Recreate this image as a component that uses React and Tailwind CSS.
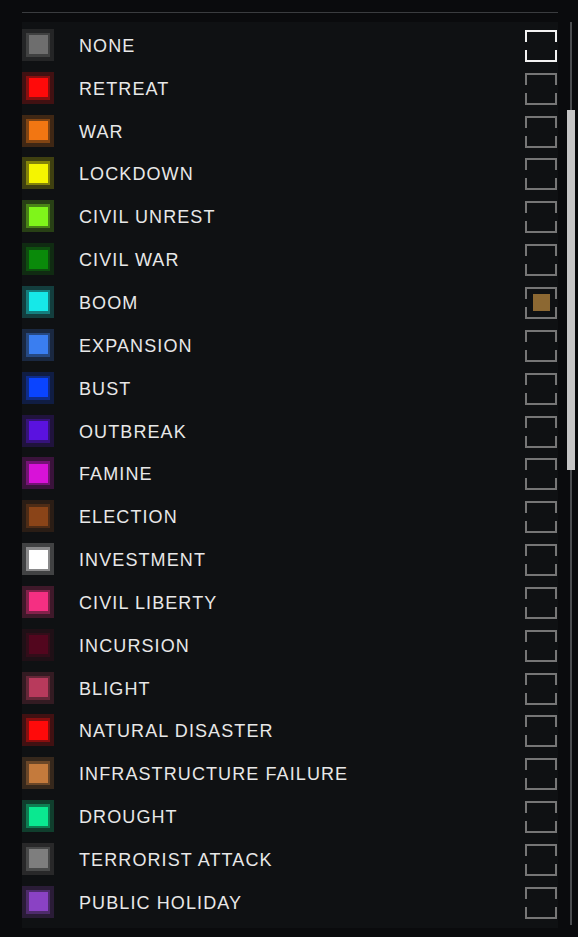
const STATES = [
    { name: 'NONE', color: '#6e6e6e' },
    { name: 'RETREAT', color: '#ff0a0a' },
    { name: 'WAR', color: '#f27612' },
    { name: 'LOCKDOWN', color: '#f5f500' },
    { name: 'CIVIL UNREST', color: '#7ff51a' },
    { name: 'CIVIL WAR', color: '#0a8a0a' },
    { name: 'BOOM', color: '#16e8e8' },
    { name: 'EXPANSION', color: '#3a7ef0' },
    { name: 'BUST', color: '#0a44ff' },
    { name: 'OUTBREAK', color: '#5a12e0' },
    { name: 'FAMINE', color: '#d812d8' },
    { name: 'ELECTION', color: '#8a4418' },
    { name: 'INVESTMENT', color: '#ffffff' },
    { name: 'CIVIL LIBERTY', color: '#f52f82' },
    { name: 'INCURSION', color: '#52061e' },
    { name: 'BLIGHT', color: '#b83a5c' },
    { name: 'NATURAL DISASTER', color: '#ff0a0a' },
    { name: 'INFRASTRUCTURE FAILURE', color: '#c47a3c' },
    { name: 'DROUGHT', color: '#0ae890' },
    { name: 'TERRORIST ATTACK', color: '#7e7e7e' },
    { name: 'PUBLIC HOLIDAY', color: '#8a42c4' },
];

const Swatch = ({ color }) => (
    <div
        className="w-8 h-8 flex items-center justify-center"
        style={{ backgroundColor: `color-mix(in srgb, ${color} 20%, #121314)` }}
    >
        <div
            className="w-[24px] h-[24px] flex items-center justify-center"
            style={{ backgroundColor: `color-mix(in srgb, ${color} 50%, #121314)` }}
        >
            <div className="w-[19px] h-[19px]" style={{ backgroundColor: color }}></div>
        </div>
    </div>
);

const CheckBox = ({ state }) => {
    const stroke = state === 'active' ? '#f2f2f2' : '#767676';
    return (
        <div className="relative w-8 h-8 flex items-center justify-center">
            <svg width="32" height="32" viewBox="0 0 32 32" className="absolute inset-0">
                <path d="M1 12 V1 H31 V12 M1 20 V31 H31 V20" fill="none" stroke={stroke} strokeWidth="2" />
            </svg>
            {state === 'filled' && <div className="w-[17px] h-[17px] bg-[#8c6832]"></div>}
        </div>
    );
};

export default function App() {
    return (
        <div className="w-[578px] h-[937px] bg-[#0a0b0d] overflow-hidden" style={{ fontFamily: '"Liberation Sans", Arial, sans-serif' }}>
            <div className="h-3"></div>
            <div className="ml-[22px] w-[536px] h-px bg-[#3a3c3f]"></div>
            <div className="flex mt-[9px] ml-[22px]">
                <div className="w-[536px] h-[906px] bg-[#0f1113] pt-[1.5px]">
                    {STATES.map((s, i) => (
                        <div key={s.name} className="flex items-center h-[42.85px]">
                            <Swatch color={s.color} />
                            <span className="ml-[25px] mt-[2px] text-[18px] tracking-[1.1px] text-[#e8e8e8] leading-none">{s.name}</span>
                            <div className="ml-auto mr-[1px] mt-[2px]">
                                <CheckBox state={i === 0 ? 'active' : s.name === 'BOOM' ? 'filled' : 'empty'} />
                            </div>
                        </div>
                    ))}
                </div>
                <div className="relative ml-[9px] w-[8px] h-[903px] flex justify-center">
                    <div className="w-[2px] h-full bg-[#4a4c4f]"></div>
                    <div className="absolute left-0 top-[88px] w-[8px] h-[360px] bg-[#c6c6c6]"></div>
                </div>
            </div>
        </div>
    );
}
